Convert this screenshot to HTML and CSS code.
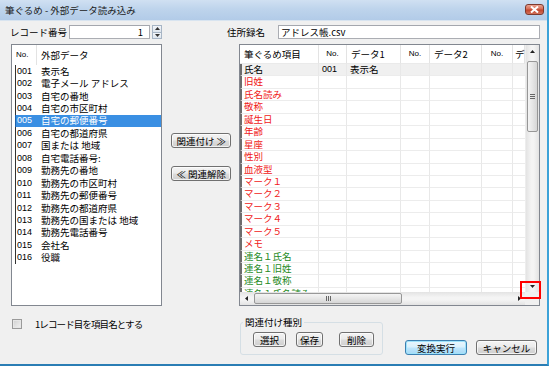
FILE: index.html
```html
<!DOCTYPE html>
<html lang="ja">
<head>
<meta charset="utf-8">
<title>筆ぐるめ - 外部データ読み込み</title>
<link rel="stylesheet" href="styles.css">
</head>
<body>
<div class="window">
  <div class="titlebar">
    <span class="title">筆ぐるめ - 外部データ読み込み</span>
    <span class="close"><svg width="9" height="7" viewBox="0 0 9 7"><path d="M1 0.5 L8 6.5 M8 0.5 L1 6.5" stroke="#fff" stroke-width="2"/></svg></span>
  </div>
  <div class="content">
    <div class="toprow">
      <span class="lbl rec-lbl">レコード番号</span>
      <div class="textbox spinbox">1</div>
      <div class="spinner">
        <span class="spin-btn"><svg width="5" height="3" viewBox="0 0 5 3"><path d="M0 3 L2.5 0 L5 3Z" fill="#333"/></svg></span>
        <span class="spin-btn"><svg width="5" height="3" viewBox="0 0 5 3"><path d="M0 0 L2.5 3 L5 0Z" fill="#333"/></svg></span>
      </div>
      <span class="lbl file-lbl">住所録名</span>
      <div class="textbox filebox">アドレス帳.csv</div>
    </div>

    <div class="main">
      <div class="listbox">
        <div class="lhead"><span class="l-no">No.</span><span class="l-name">外部データ</span></div>
        <div class="lrow"><span class="l-no">001</span><span class="l-name">表示名</span></div>
        <div class="lrow"><span class="l-no">002</span><span class="l-name">電子メール アドレス</span></div>
        <div class="lrow"><span class="l-no">003</span><span class="l-name">自宅の番地</span></div>
        <div class="lrow"><span class="l-no">004</span><span class="l-name">自宅の市区町村</span></div>
        <div class="lrow sel"><span class="l-no">005</span><span class="l-name">自宅の郵便番号</span></div>
        <div class="lrow"><span class="l-no">006</span><span class="l-name">自宅の都道府県</span></div>
        <div class="lrow"><span class="l-no">007</span><span class="l-name">国または 地域</span></div>
        <div class="lrow"><span class="l-no">008</span><span class="l-name">自宅電話番号:</span></div>
        <div class="lrow"><span class="l-no">009</span><span class="l-name">勤務先の番地</span></div>
        <div class="lrow"><span class="l-no">010</span><span class="l-name">勤務先の市区町村</span></div>
        <div class="lrow"><span class="l-no">011</span><span class="l-name">勤務先の郵便番号</span></div>
        <div class="lrow"><span class="l-no">012</span><span class="l-name">勤務先の都道府県</span></div>
        <div class="lrow"><span class="l-no">013</span><span class="l-name">勤務先の国または 地域</span></div>
        <div class="lrow"><span class="l-no">014</span><span class="l-name">勤務先電話番号</span></div>
        <div class="lrow"><span class="l-no">015</span><span class="l-name">会社名</span></div>
        <div class="lrow"><span class="l-no">016</span><span class="l-name">役職</span></div>
      </div>

      <div class="mid">
        <button class="btn midbtn first">関連付け ≫</button>
        <button class="btn midbtn">≪ 関連解除</button>
      </div>

      <div class="grid">
        <div class="gbody">
          <div class="gtable">
            <div class="grow ghead">
              <span class="gc">筆ぐるめ項目</span><span class="gc num">No.</span><span class="gc">データ1</span><span class="gc num">No.</span><span class="gc">データ2</span><span class="gc num">No.</span><span class="gc last">デ</span>
            </div>
            <div class="grow cur"><span class="gc first">氏名</span><span class="gc">001</span><span class="gc">表示名</span><span class="gc"></span><span class="gc"></span><span class="gc"></span><span class="gc"></span></div>
            <div class="grow red"><span class="gc first">旧姓</span><span class="gc"></span><span class="gc"></span><span class="gc"></span><span class="gc"></span><span class="gc"></span><span class="gc"></span></div>
            <div class="grow red"><span class="gc first">氏名読み</span><span class="gc"></span><span class="gc"></span><span class="gc"></span><span class="gc"></span><span class="gc"></span><span class="gc"></span></div>
            <div class="grow red"><span class="gc first">敬称</span><span class="gc"></span><span class="gc"></span><span class="gc"></span><span class="gc"></span><span class="gc"></span><span class="gc"></span></div>
            <div class="grow red"><span class="gc first">誕生日</span><span class="gc"></span><span class="gc"></span><span class="gc"></span><span class="gc"></span><span class="gc"></span><span class="gc"></span></div>
            <div class="grow red"><span class="gc first">年齢</span><span class="gc"></span><span class="gc"></span><span class="gc"></span><span class="gc"></span><span class="gc"></span><span class="gc"></span></div>
            <div class="grow red"><span class="gc first">星座</span><span class="gc"></span><span class="gc"></span><span class="gc"></span><span class="gc"></span><span class="gc"></span><span class="gc"></span></div>
            <div class="grow red"><span class="gc first">性別</span><span class="gc"></span><span class="gc"></span><span class="gc"></span><span class="gc"></span><span class="gc"></span><span class="gc"></span></div>
            <div class="grow red"><span class="gc first">血液型</span><span class="gc"></span><span class="gc"></span><span class="gc"></span><span class="gc"></span><span class="gc"></span><span class="gc"></span></div>
            <div class="grow red"><span class="gc first">マーク１</span><span class="gc"></span><span class="gc"></span><span class="gc"></span><span class="gc"></span><span class="gc"></span><span class="gc"></span></div>
            <div class="grow red"><span class="gc first">マーク２</span><span class="gc"></span><span class="gc"></span><span class="gc"></span><span class="gc"></span><span class="gc"></span><span class="gc"></span></div>
            <div class="grow red"><span class="gc first">マーク３</span><span class="gc"></span><span class="gc"></span><span class="gc"></span><span class="gc"></span><span class="gc"></span><span class="gc"></span></div>
            <div class="grow red"><span class="gc first">マーク４</span><span class="gc"></span><span class="gc"></span><span class="gc"></span><span class="gc"></span><span class="gc"></span><span class="gc"></span></div>
            <div class="grow red"><span class="gc first">マーク５</span><span class="gc"></span><span class="gc"></span><span class="gc"></span><span class="gc"></span><span class="gc"></span><span class="gc"></span></div>
            <div class="grow red"><span class="gc first">メモ</span><span class="gc"></span><span class="gc"></span><span class="gc"></span><span class="gc"></span><span class="gc"></span><span class="gc"></span></div>
            <div class="grow green"><span class="gc first">連名１氏名</span><span class="gc"></span><span class="gc"></span><span class="gc"></span><span class="gc"></span><span class="gc"></span><span class="gc"></span></div>
            <div class="grow green"><span class="gc first">連名１旧姓</span><span class="gc"></span><span class="gc"></span><span class="gc"></span><span class="gc"></span><span class="gc"></span><span class="gc"></span></div>
            <div class="grow green"><span class="gc first">連名１敬称</span><span class="gc"></span><span class="gc"></span><span class="gc"></span><span class="gc"></span><span class="gc"></span><span class="gc"></span></div>
            <div class="grow green"><span class="gc first">連名１氏名読み</span><span class="gc"></span><span class="gc"></span><span class="gc"></span><span class="gc"></span><span class="gc"></span><span class="gc"></span></div>
          </div>
          <div class="vscroll">
            <span class="sbtn"><svg width="5" height="3" viewBox="0 0 5 3"><path d="M0 3 L2.5 0 L5 3Z" fill="#222"/></svg></span>
            <div class="vtrack">
              <div class="vthumb"><svg width="5" height="5" viewBox="0 0 5 5"><path d="M0 0.5H5M0 2.5H5M0 4.5H5" stroke="#666" stroke-width="1"/></svg></div>
            </div>
            <span class="sbtn"><svg width="5" height="3" viewBox="0 0 5 3"><path d="M0 0 L2.5 3 L5 0Z" fill="#222"/></svg></span>
          </div>
        </div>
        <div class="gfoot">
          <div class="hscroll">
            <span class="hbtn"><svg width="3" height="5" viewBox="0 0 3 5"><path d="M3 0 L0 2.5 L3 5Z" fill="#222"/></svg></span>
            <div class="htrack">
              <div class="hthumb"><svg width="5" height="5" viewBox="0 0 5 5"><path d="M0.5 0V5M2.5 0V5M4.5 0V5" stroke="#666" stroke-width="1"/></svg></div>
            </div>
            <span class="hbtn"><svg width="3" height="5" viewBox="0 0 3 5"><path d="M0 0 L3 2.5 L0 5Z" fill="#222"/></svg></span>
          </div>
          <div class="corner"></div>
        </div>
        <div class="redbox"></div>
      </div>
    </div>

    <div class="bottom">
      <div class="chkarea">
        <span class="cbox"></span>
        <span class="chklbl">1レコード目を項目名とする</span>
      </div>
      <fieldset class="group">
        <legend>関連付け種別</legend>
        <button class="btn gbtn b1">選択</button>
        <button class="btn gbtn b2">保存</button>
        <button class="btn gbtn b3">削除</button>
      </fieldset>
      <button class="btn dlgbtn primary">変換実行</button>
      <button class="btn dlgbtn cancel">キャンセル</button>
    </div>
  </div>
</div>
</body>
</html>
```

FILE: styles.css
```css
* { box-sizing: border-box; }
html, body { margin: 0; padding: 0; background: #ffffff; }
body {
  font-family: "Noto Sans CJK JP", "Noto Sans", sans-serif;
  font-size: 9.5px;
  line-height: 12px;
  color: #000;
}
.window {
  width: 549px;
  height: 366px;
  background: #f0f0f0;
  border-right: 2px solid #3ca2d8;
  border-bottom: 2px solid #2a7db4;
  display: flex;
  flex-direction: column;
  overflow: hidden;
}
.titlebar {
  height: 21px;
  flex: none;
  display: flex;
  align-items: center;
  justify-content: space-between;
  padding: 0 3px 0 5px;
  background: linear-gradient(to bottom, #d0e0f2 0%, #bed4ec 45%, #b2cbe8 100%);
  border-bottom: 1px solid #d8e4f0;
}
.title { font-size: 9.5px; color: #1a1a1a; }
.close {
  width: 19px;
  height: 11px;
  margin-top: -2px;
  border: 1px solid #7d3a2f;
  border-radius: 3px;
  background: linear-gradient(to bottom, #e9a493 0%, #d66c55 45%, #c2452c 55%, #d2715a 100%);
  display: flex;
  align-items: center;
  justify-content: center;
}
.content {
  flex: 1;
  display: flex;
  flex-direction: column;
  padding: 4px 7px 0 10px;
}
.toprow {
  display: flex;
  align-items: center;
  height: 14px;
}
.lbl { white-space: nowrap; }
.rec-lbl { width: 59px; }
.textbox {
  height: 14px;
  background: #fff;
  border: 1px solid #abadb3;
  border-top-color: #a4a7ae;
  line-height: 12px;
  padding: 0 3px;
  white-space: nowrap;
}
.spinbox { width: 81px; text-align: right; padding-right: 6px; }
.spinner {
  width: 10px;
  height: 14px;
  margin-left: 2px;
  display: flex;
  flex-direction: column;
}
.spin-btn {
  flex: 1;
  border: 1px solid #a7b5c5;
  background: linear-gradient(to bottom, #f2f5f9, #dfe6ee);
  display: flex;
  align-items: center;
  justify-content: center;
}
.spin-btn + .spin-btn { border-top: none; }
.file-lbl { margin-left: 65px; width: 51px; }
.filebox { width: 262px; padding-left: 2px; }

.main {
  display: flex;
  margin-top: 5px;
  height: 262px;
}
.listbox {
  width: 152px;
  margin-left: 1px;
  background: #fff;
  border: 1px solid #828790;
  overflow: hidden;
  padding-left: 3px;
}
.lhead {
  height: 20px;
  display: flex;
  align-items: center;
}
.lhead .l-no {
  width: 22px;
  height: 100%;
  display: flex;
  align-items: center;
  border-right: 1px solid #e3e3e3;
  font-family: "Liberation Sans", sans-serif;
  font-size: 8px;
  padding-left: 1px;
}
.lhead .l-name { padding-left: 4px; }
.lrow {
  height: 12.45px;
  display: flex;
  align-items: center;
  border-left: 1px solid #333;
  white-space: nowrap;
  line-height: 11px;
}
.lrow .l-no {
  width: 25px;
  padding-left: 1px;
  font-family: "Liberation Sans", sans-serif;
  font-size: 9px;
}
.lrow.sel { background: #3a8fe3; color: #fff; border-left-color: #1d5fa8; }

.mid {
  width: 77px;
  display: flex;
  flex-direction: column;
  padding-left: 9px;
  padding-top: 89px;
}
.btn {
  font-family: inherit;
  font-size: 9.5px;
  line-height: 12px;
  color: #000;
  padding: 0;
  height: 15px;
  border: 1px solid #707070;
  border-radius: 3px;
  background: linear-gradient(to bottom, #f3f3f3 0%, #ebebeb 48%, #dcdcdc 52%, #cfcfcf 100%);
  box-shadow: inset 0 0 0 1px rgba(255,255,255,0.7);
  white-space: nowrap;
}
.midbtn { width: 60px; }
.midbtn + .midbtn { margin-top: 18px; }

.grid {
  position: relative;
  width: 301px;
  border: 1px solid #828790;
  background: #fff;
  display: flex;
  flex-direction: column;
}
.gbody {
  height: 247px;
  display: flex;
}
.gtable {
  width: 285px;
  overflow: hidden;
}
.grow {
  display: grid;
  grid-template-columns: 79px 28px 54px 29px 52px 31px 12px;
  height: 12.45px;
}
.gc {
  border-right: 1px solid #e8e8e8;
  border-bottom: 1px solid #ececec;
  white-space: nowrap;
  padding-left: 3px;
  line-height: 11px;
}
.gc:last-child { border-right: none; }
.grow .gc.first {
  border-left: 2px solid #6d6d6d;
  padding-left: 2px;
}
.grow.cur { background: #f0f0f0; }
.grow.cur .gc:nth-child(2) { font-family: "Liberation Sans", sans-serif; font-size: 9px; }
.grow.red { color: #f01818; }
.grow.green { color: #1e8a1e; }
.ghead {
  height: 19px;
  background: #fff;
}
.ghead .gc {
  border-bottom: 1px solid #eaeaea;
  border-right: 1px solid #e3e3e3;
  line-height: 18px;
  padding-left: 4px;
}
.ghead .gc.last { padding-left: 2px; }
.ghead .gc.num {
  font-family: "Liberation Sans", sans-serif;
  font-size: 8px;
  text-align: center;
  padding-left: 0;
}
.vscroll {
  width: 14px;
  display: flex;
  flex-direction: column;
  background: linear-gradient(to right, #e3e3e3, #f4f4f4 40%, #f4f4f4 60%, #e3e3e3);
  border-left: 1px solid #ededed;
}
.sbtn {
  height: 12px;
  flex: none;
  display: flex;
  align-items: center;
  justify-content: center;
}
.vtrack {
  flex: 1;
  padding: 4px 1px 0 1px;
}
.vthumb {
  height: 71px;
  border: 1px solid #979797;
  border-radius: 2px;
  background: linear-gradient(to right, #f4f4f4, #e6e6e6 50%, #d6d6d6);
  display: flex;
  align-items: center;
  justify-content: center;
}
.gfoot {
  flex: 1;
  display: flex;
}
.hscroll {
  width: 285px;
  display: flex;
  background: linear-gradient(to bottom, #e3e3e3, #f4f4f4 40%, #f4f4f4 60%, #e3e3e3);
}
.hbtn {
  width: 12px;
  flex: none;
  display: flex;
  align-items: center;
  justify-content: center;
}
.htrack {
  flex: 1;
  padding: 1px 0 1px 2px;
}
.hthumb {
  width: 148px;
  height: 100%;
  border: 1px solid #979797;
  border-radius: 2px;
  background: linear-gradient(to bottom, #f4f4f4, #e6e6e6 50%, #d6d6d6);
  display: flex;
  align-items: center;
  justify-content: center;
}
.corner { flex: 1; background: #f0f0f0; }
.redbox {
  position: absolute;
  left: 280px;
  top: 236px;
  width: 21px;
  height: 18px;
  border: 2px solid #ff0000;
}

.bottom {
  display: flex;
  margin-top: 11px;
  height: 38px;
}
.chkarea {
  width: 230px;
  display: flex;
  align-items: flex-start;
  padding-top: 2px;
}
.cbox {
  width: 10px;
  height: 10px;
  margin-left: 2px;
  border: 1px solid #9a9a9a;
  background: linear-gradient(135deg, #d0d0d0, #f2f2f2);
  box-shadow: inset 0 0 0 1px #e6e6e6;
}
.chklbl { margin-left: 13px; margin-top: -1px; letter-spacing: -0.9px; }
.group {
  width: 143px;
  height: 38px;
  margin: 0;
  padding: 0 0 0 12px;
  border: 1px solid #d5dfe5;
  border-radius: 3px;
  display: flex;
  align-items: flex-start;
}
.group legend {
  padding: 0 2px;
  margin-left: -10px;
  line-height: 11px;
}
.gbtn { margin-top: 4px; }
.b1 { width: 33px; }
.b2 { width: 27px; margin-left: 10px; }
.b3 { width: 35px; margin-left: 16px; }
.dlgbtn {
  align-self: flex-end;
}
.primary {
  width: 62px;
  margin-left: 22px;
  border-color: #3c7fb1;
  background: linear-gradient(to bottom, #eaf6fd 0%, #d9f0fc 48%, #bee6fd 52%, #a7d9f5 100%);
  box-shadow: inset 0 0 0 1px #9ee3fb;
}
.cancel { width: 61px; margin-left: 9px; }
```
